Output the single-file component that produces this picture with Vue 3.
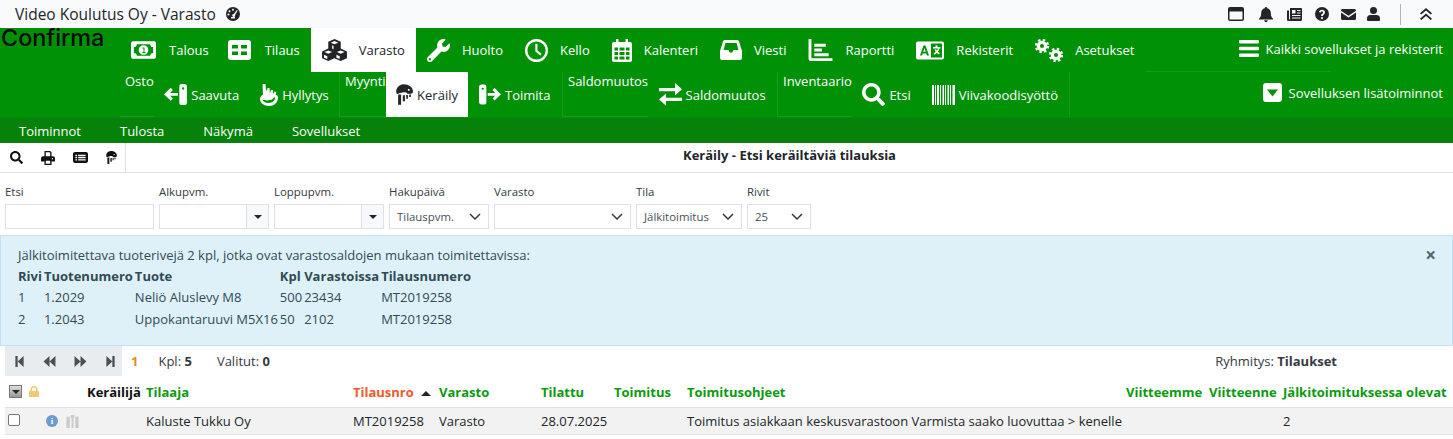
<script setup>
import { h } from 'vue'

const icons = {
  money: { vb: '0 0 26 18', d: 'M2 0h22a2 2 0 0 1 2 2v14a2 2 0 0 1-2 2H2a2 2 0 0 1-2-2V2a2 2 0 0 1 2-2zM6 3a3 3 0 0 1-3 3v6a3 3 0 0 1 3 3h14a3 3 0 0 1 3-3V6a3 3 0 0 1-3-3zM13 4a5 5 0 1 1 0 10a5 5 0 0 1 0-10zM12 6.500v1h1v3.500h-1v1h3v-1h-1V6.500z' },
  grid: { vb: '0 0 23 20', d: 'M3 0h17a3 3 0 0 1 3 3v14a3 3 0 0 1-3 3H3a3 3 0 0 1-3-3V3a3 3 0 0 1 3-3zM4 5v3.500h6V5zM13 5v3.500h6V5zM4 11.500V15h6v-3.500zM13 11.500V15h6v-3.500z' },
  wrench: { vb: '0 0 512 512', d: 'M507.73 109.1c-2.24-9.03-13.54-12.09-20.12-5.51l-74.36 74.36-67.88-11.31-11.31-67.88 74.36-74.36c6.62-6.62 3.43-17.9-5.66-20.16-47.38-11.74-99.55.91-136.58 37.93-39.64 39.64-50.55 97.1-34.05 147.2L18.74 402.76c-24.99 24.99-24.99 65.51 0 90.5 24.99 24.99 65.51 24.99 90.5 0l213.21-213.21c50.12 16.71 107.47 5.68 147.37-34.22 37.07-37.07 49.7-89.32 37.91-136.73zM64 472c-13.25 0-24-10.75-24-24 0-13.26 10.75-24 24-24s24 10.74 24 24c0 13.25-10.75 24-24 24z' },
  clock: { vb: '0 0 24 24', d: 'M12 0a12 12 0 1 1 0 24a12 12 0 0 1 0-24zM12 2.500a9.500 9.500 0 1 0 0 19a9.500 9.500 0 0 0 0-19zM10.800 5h2.200v7l4.300 3.500-1.400 1.700-5.100-4.200z' },
  calendar: { vb: '0 0 20 23', d: 'M4 0h2.500v3h7V0H16v3h2a2 2 0 0 1 2 2v16a2 2 0 0 1-2 2H2a2 2 0 0 1-2-2V5a2 2 0 0 1 2-2h2zM2.500 8.500v3h3.500v-3zM7.500 8.500v3h5v-3zM14 8.500v3h3.500v-3zM2.500 13v3h3.500v-3zM7.500 13v3h5v-3zM14 13v3h3.500v-3zM2.500 17.500v3h3.500v-3zM7.500 17.500v3h5v-3zM14 17.500v3h3.500v-3z' },
  inbox: { vb: '0 0 22 20', d: 'M5 0h12a2 2 0 0 1 2 1.500L22 11v7a2 2 0 0 1-2 2H2a2 2 0 0 1-2-2v-7L3 1.500A2 2 0 0 1 5 0zM5.500 3L3.500 10h5l1.200 2.500h2.600L13.500 10h5l-2-7z' },
  chart: { vb: '0 0 25 23', d: 'M0 0h3v20h22v3H3a3 3 0 0 1-3-3zM6 5h12v3H6zM6 10h8v3H6zM6 15h15v3H6z' },
  lang: { vb: '0 0 28 18', d: 'M2 0h24a2 2 0 0 1 2 2v14a2 2 0 0 1-2 2H2a2 2 0 0 1-2-2V2a2 2 0 0 1 2-2zM7.500 4L4 14h2l.7-2h3.600l.7 2h2L9.500 4zM8.500 6.500l1.200 3.800H7.300zM15 2v14h11V2zM19.500 4h2v1.500h3V7h-1a8 8 0 0 1-1.600 3.300l1.900 1.500-1 1.200-2-1.500-2.300 1.700-1-1.200 2.300-1.700A8 8 0 0 1 18.500 8h1.700c.2.600.5 1 .8 1.300.4-.6.700-1.400.8-2.300H17V5.500h2.500z' },
  bars: { vb: '0 0 20 17', d: 'M1 0h18a1 1 0 0 1 1 1v1.500a1 1 0 0 1-1 1H1a1 1 0 0 1-1-1V1a1 1 0 0 1 1-1zM1 6.700h18a1 1 0 0 1 1 1v1.500a1 1 0 0 1-1 1H1a1 1 0 0 1-1-1V7.700a1 1 0 0 1 1-1zM1 13.500h18a1 1 0 0 1 1 1V16a1 1 0 0 1-1 1H1a1 1 0 0 1-1-1v-1.500a1 1 0 0 1 1-1z' },
  caretbox: { vb: '0 0 19 19', d: 'M3 0h13a3 3 0 0 1 3 3v13a3 3 0 0 1-3 3H3a3 3 0 0 1-3-3V3a3 3 0 0 1 3-3zM4 6.500l5.500 7 5.500-7z' },
  saavuta: { vb: '0 0 24 22', d: 'M18 0h3a3 3 0 0 1 3 3v16a3 3 0 0 1-3 3h-3a2 2 0 0 1-2-2V2a2 2 0 0 1 2-2zM20 3.500a1.200 1.200 0 1 0 0 2.400a1.200 1.200 0 0 0 0-2.400zM7 4l2.200 2.200L6.400 9.300H14.500v3H6.400l2.800 3.100L7 17.500 0 10.800z' },
  toimita: { vb: '0 0 24 22', d: 'M3 0h3a2 2 0 0 1 2 2v18a2 2 0 0 1-2 2H3a3 3 0 0 1-3-3V3a3 3 0 0 1 3-3zM4 3.500a1.200 1.200 0 1 0 0 2.400a1.200 1.200 0 0 0 0-2.400zM17 4l7 6.800-7 6.700-2.200-2.100 2.800-3.100H9.500v-3h8.100l-2.800-3.100z' },
  hand: { vb: '0 0 18 22', d: 'M2.500 0h3l.5 6.500h.8L7.500 4h2l.3 4.500h.6l.5-2.500h2l0 3.300.8.300.7-2 1.700.5-.3 3C17.500 11 18 12 18 13.500 18 18.500 14 22 9 22 4 22 0 19 0 15c0-2 1.500-3.500 3-4.500zM2.500 15.500C5 16.800 10 16.800 12.500 15L14 13.500c1-.5 1.500.5 1 1.500-1.500 3-4 4-6.500 4-3 0-5.500-1.500-6-3.500z' },
  swap: { vb: '0 0 23 23', d: 'M16 0l7 6.200-7 6.300V8.300H0V5h16zM7 10.500v4.200h16V18H7v4.800L0 16.500z' },
  search: { vb: '0 0 512 512', d: 'M505 442.7L405.300 343c-4.500-4.500-10.600-7-17-7H372c27.600-35.300 44-79.700 44-128C416 93.100 322.900 0 208 0S0 93.100 0 208s93.100 208 208 208c48.300 0 92.700-16.400 128-44v16.300c0 6.400 2.500 12.500 7 17l99.700 99.700c9.400 9.400 24.600 9.400 33.900 0l28.300-28.300c9.400-9.400 9.400-24.600.1-34zM208 336c-70.700 0-128-57.200-128-128 0-70.700 57.200-128 128-128 70.700 0 128 57.200 128 128 0 70.700-57.200 128-128 128z' },
  barcode: { vb: '0 0 23 20', d: 'M0 0h2v20H0zM3 0h1v20H3zM5 0h2v20H5zM8 0h1v20H8zM10.500 0h1.500v20h-1.500zM13 0h1v20h-1zM15.500 0h1.500v20h-1.500zM18 0h1v20h-1zM20.500 0h2.500v20h-2.500z' },
  kerays: { vb: '0 0 20 24', d: 'M9 0c6 0 11 3.500 11 8.500 0 1.500-1 2.500-2.500 2.500H13.500c-1-1.500-3-2-6-1.500C4 10 1.500 11.500 1 11.500 0 9 0 7 1 5 2.500 2 5.500 0 9 0zM2.500 12h3.500v12H2.500zM8 13h2.500v7H8zM12 12.500h2v4.500h-2zM15.500 12h2v3h-2zM14 5.500h2v2h-2z' },
  table: { vb: '0 0 22 16', d: 'M3 0h16a3 3 0 0 1 3 3v10a3 3 0 0 1-3 3H3a3 3 0 0 1-3-3V3a3 3 0 0 1 3-3zM3.500 4v2h2.500V4zM7.500 4v2h11V4zM3.500 7.200v2h2.500v-2zM7.500 7.200v2h11v-2zM3.500 10.400v2h2.500v-2zM7.500 10.400v2h11v-2z' },
  print: { vb: '0 0 16 16', d: 'M4 0h6.500L12 1.500V6h1.500A2.500 2.500 0 0 1 16 8.500V12h-4V16H4v-4H0V8.500A2.500 2.500 0 0 1 2.500 6H4zM5.500 1.500V6h5V2.200L9.800 1.500zM5.500 11V14.500h5V11zM13 8a.8.800 0 1 0 0 1.600a.8.800 0 0 0 0-1.600z' },
  browser: { vb: '0 0 16 14', d: 'M2 0h12a2 2 0 0 1 2 2v10a2 2 0 0 1-2 2H2a2 2 0 0 1-2-2V2a2 2 0 0 1 2-2zM1.500 4.500V12a.5.500 0 0 0 .5.500h12a.5.500 0 0 0 .5-.500V4.500z' },
  bell: { vb: '0 0 14 15', d: 'M7 0a1.200 1.200 0 0 1 1.200 1.300C10.500 1.800 11.800 3.700 11.800 6c0 3 .6 4 2.200 5.800V12.500H0v-.7C1.600 10 2.200 9 2.200 6c0-2.300 1.300-4.200 3.600-4.700A1.200 1.200 0 0 1 7 0zM5.200 13.300h3.600A1.800 1.800 0 0 1 5.200 13.300z' },
  news: { vb: '0 0 15 13', d: 'M3.500 0h10.500a1 1 0 0 1 1 1v10.500A1.500 1.500 0 0 1 13.500 13H1.500A1.500 1.500 0 0 1 0 11.500V2.500h2V11a.5.500 0 0 0 1 0V.500A.5.500 0 0 1 3.500 0zM5 2v3.500h3.500V2zM10 2v1h3.500V2zM10 4.500v1h3.500v-1zM5 7v1h8.500V7zM5 9.500v1h8.500v-1z' },
  help: { vb: '0 0 14 14', d: 'M7 0a7 7 0 1 1 0 14a7 7 0 0 1 0-14zM7 2.800c-1.800 0-2.800 1-3 2.300l1.500.6c.2-.8.700-1.300 1.500-1.300.7 0 1.200.4 1.200 1 0 1.100-2.100 1.300-2.100 3.300v.3h1.800c0-1.300 2.100-1.400 2.100-3.700 0-1.500-1.300-2.500-3-2.500zM7 10a1.100 1.100 0 1 0 0 2.200a1.100 1.100 0 0 0 0-2.200z' },
  mail: { vb: '0 0 15 11', d: 'M1.500 0h12A1.500 1.500 0 0 1 15 1.500v.3L7.500 6.800 0 1.800V1.500A1.500 1.500 0 0 1 1.500 0zM0 3.500l7.500 5 7.500-5v6A1.500 1.500 0 0 1 13.500 11h-12A1.500 1.500 0 0 1 0 9.500z' },
  user: { vb: '0 0 13 14', d: 'M6.500 0a3.500 3.500 0 1 1 0 7a3.500 3.500 0 0 1 0-7zM3.500 8h6A3.500 3.500 0 0 1 13 11.500V13a1 1 0 0 1-1 1H1a1 1 0 0 1-1-1v-1.500A3.500 3.500 0 0 1 3.500 8z' },
  chevrons: { vb: '0 0 12 12', d: 'M6 0l6 5.200-1.200 1.300L6 2.400 1.200 6.500 0 5.200zM6 5.500l6 5.200-1.200 1.300L6 7.900 1.200 12 0 10.700z' },
  gauge: { vb: '0 0 14 14', d: 'M7 0a7 7 0 1 1 0 14a7 7 0 0 1 0-14zM7 1.800a1 1 0 1 0 0 2a1 1 0 0 0 0-2zM3.500 3.200a1 1 0 1 0 0 2a1 1 0 0 0 0-2zM10.800 3l-3 4a1.500 1.500 0 1 0 1.300 1l2.600-4.400zM2.500 6.500a1 1 0 1 0 0 2a1 1 0 0 0 0-2zM5 10h4v1.500H5z' },
  first: { vb: '0 0 9 12', d: 'M0 0h2.500v12H0zM9 0v12L2.500 6z' },
  prev: { vb: '0 0 13 12', d: 'M6.500 0v12L0 6zM13 0v12L6.500 6z' },
  next: { vb: '0 0 13 12', d: 'M0 0l6.500 6L0 12zM6.500 0L13 6l-6.500 6z' },
  last: { vb: '0 0 9 12', d: 'M0 0l6.500 6L0 12zM6.500 0H9v12H6.500z' },
  lock: { vb: '0 0 10 11', d: 'M5 0a3.500 3.500 0 0 1 3.500 3.500V5H10v6H0V5h1.500V3.500A3.500 3.500 0 0 1 5 0zM5 1.500a2 2 0 0 0-2 2V5h4V3.500a2 2 0 0 0-2-2z' },
  doc: { vb: '0 0 13 14', d: 'M0 2h3.500v12H0zM9.500 2H13v12H9.500zM4.500 0h4v2l-1 2v10h-2V4l-1-2z' }
}

const Icon = (props) => {
  const i = icons[props.name]
  return h('svg', { viewBox: i.vb, width: props.w, height: props.h, fill: 'currentColor', 'aria-hidden': 'true', style: 'display:block;flex:none' }, [
    h('path', { d: i.d, 'fill-rule': 'evenodd' })
  ])
}
Icon.props = ['name', 'w', 'h']

const main = [
  { t: 'Talous', i: 'money', w: 25, h: 18 },
  { t: 'Tilaus', i: 'grid', w: 23, h: 20 },
  { t: 'Varasto', cubes: true, active: true },
  { t: 'Huolto', i: 'wrench', w: 23, h: 23 },
  { t: 'Kello', i: 'clock', w: 23, h: 23 },
  { t: 'Kalenteri', i: 'calendar', w: 20, h: 23 },
  { t: 'Viesti', i: 'inbox', w: 22, h: 20 },
  { t: 'Raportti', i: 'chart', w: 25, h: 22 },
  { t: 'Rekisterit', i: 'lang', w: 28, h: 19 },
  { t: 'Asetukset', cogs: true }
]

const groups = [
  { label: 'Osto', w: 220, items: [
    { t: 'Saavuta', i: 'saavuta', w: 23, h: 21 },
    { t: 'Hyllytys', i: 'hand', w: 18, h: 22 }
  ] },
  { label: 'Myynti', w: 223, items: [
    { t: 'Keräily', i: 'kerays', w: 17, h: 21, active: true },
    { t: 'Toimita', i: 'toimita', w: 22, h: 21 }
  ] },
  { label: 'Saldomuutos', w: 215, items: [
    { t: 'Saldomuutos', i: 'swap', w: 23, h: 23 }
  ] },
  { label: 'Inventaario', w: 292, items: [
    { t: 'Etsi', i: 'search', w: 23, h: 23 },
    { t: 'Viivakoodisyöttö', i: 'barcode', w: 23, h: 20 }
  ] }
]

const subMenu = ['Toiminnot', 'Tulosta', 'Näkymä', 'Sovellukset']
const topIcons = [
  { i: 'browser', w: 16, h: 14, g: 15 },
  { i: 'bell', w: 14, h: 15, g: 14 },
  { i: 'news', w: 15, h: 13, g: 13 },
  { i: 'help', w: 14, h: 14, g: 12 },
  { i: 'mail', w: 15, h: 11, g: 11 },
  { i: 'user', w: 13, h: 14, g: 0 }
]

const filters = [
  { label: 'Alkupvm.', w: 110, date: true },
  { label: 'Loppupvm.', w: 110, date: true },
  { label: 'Hakupäivä', w: 100, value: 'Tilauspvm.' },
  { label: 'Varasto', w: 137, value: '' },
  { label: 'Tila', w: 106, value: 'Jälkitoimitus' },
  { label: 'Rivit', w: 64, value: '25' }
]

const alertRows = [
  ['1', '1.2029', 'Neliö Aluslevy M8', '500', '23434', 'MT2019258'],
  ['2', '1.2043', 'Uppokantaruuvi M5X16', '50', '2102', 'MT2019258']
]

const heads = [
  { t: 'Tilaaja' }, { t: 'Tilausnro', sort: true }, { t: 'Varasto' }, { t: 'Tilattu' },
  { t: 'Toimitus' }, { t: 'Toimitusohjeet' }, { t: 'Viitteemme' }, { t: 'Viitteenne' }, { t: 'Jälkitoimituksessa olevat' }
]
const row = ['Kaluste Tukku Oy', 'MT2019258', 'Varasto', '28.07.2025', '', 'Toimitus asiakkaan keskusvarastoon Varmista saako luovuttaa > kenelle', '', '', '2']
const colWidths = [19, 58, 64, 207, 86, 102, 73, 73, 439, 83, 74, 170]
</script>

<template>
  <div class="page">
    <header class="titlebar">
      <div class="brand">
        <span class="apptitle">Video Koulutus Oy - Varasto</span>
        <Icon name="gauge" :w="14" :h="14" />
      </div>
      <div class="tools">
        <span v-for="x in topIcons" :key="x.i" class="tool" :style="{ marginRight: x.g + 'px' }">
          <Icon :name="x.i" :w="x.w" :h="x.h" />
        </span>
        <span class="tooldivider"></span>
        <Icon name="chevrons" :w="12" :h="12" />
      </div>
    </header>

    <nav class="mainnav">
      <div class="logo">Confirma</div>
      <div class="navleft">
        <div class="row1">
          <a v-for="m in main" :key="m.t" class="mainitem" :class="{ active: m.active }">
            <span class="mainicon">
              <svg v-if="m.cubes" viewBox="0 0 26 23" width="25" height="22" aria-hidden="true">
                <path fill="#212529" d="M13 0l6.500 3v7l6.500 3v7l-6.500 3-6.500-3-6.500 3L0 20v-7l6.500-3V3z" />
                <path fill="#fff" d="M13 2l4 1.800-4 1.800-4-1.800zM2.500 13.700l4-1.800 4 1.800-4 1.800zM15.500 13.700l4-1.800 4 1.800-4 1.800zM2 16.500l3.500 1.500v3L2 19.500zM15 16.500l3.500 1.500v3L15 19.500zM10.500 6.500l1.500 .7v3.500l-1.500-.7z" />
              </svg>
              <svg v-else-if="m.cogs" viewBox="0 0 28 23" width="28" height="23" aria-hidden="true">
                <g fill="none" stroke="#fff">
                  <circle cx="7" cy="7" r="3.700" stroke-width="3.200" />
                  <circle cx="7" cy="7" r="6" stroke-width="2.400" stroke-dasharray="2.360 2.360" />
                  <circle cx="21" cy="16" r="3.700" stroke-width="3.200" />
                  <circle cx="21" cy="16" r="6" stroke-width="2.400" stroke-dasharray="2.360 2.360" />
                </g>
              </svg>
              <Icon v-else :name="m.i" :w="m.w" :h="m.h" />
            </span>
            <span>{{ m.t }}</span>
          </a>
        </div>
        <div class="row2">
          <section v-for="g in groups" :key="g.label" class="group" :style="{ width: g.w + 'px' }">
            <div class="grouplabel">{{ g.label }}</div>
            <a v-for="it in g.items" :key="it.t" class="subitem" :class="{ active: it.active }">
              <Icon :name="it.i" :w="it.w" :h="it.h" />
              <span>{{ it.t }}</span>
            </a>
          </section>
        </div>
      </div>
      <div class="navright">
        <a class="allapps"><Icon name="bars" :w="20" :h="17" /><span>Kaikki sovellukset ja rekisterit</span></a>
        <hr class="navrule" />
        <a class="moreapps"><Icon name="caretbox" :w="19" :h="19" /><span>Sovelluksen lisätoiminnot</span></a>
      </div>
    </nav>

    <div class="submenu"><span v-for="s in subMenu" :key="s">{{ s }}</span></div>

    <div class="toolbar">
      <div class="tbicons">
        <Icon name="search" :w="13" :h="13" />
        <Icon name="print" :w="14" :h="14" />
        <Icon name="table" :w="15" :h="11" />
        <Icon name="kerays" :w="11" :h="13" />
      </div>
      <h1 class="pagetitle">Keräily - Etsi keräiltäviä tilauksia</h1>
    </div>

    <form class="filters" @submit.prevent>
      <label class="field etsi"><span>Etsi</span><span class="box"></span></label>
      <label v-for="f in filters" :key="f.label" class="field" :style="{ width: f.w + 'px' }">
        <span>{{ f.label }}</span>
        <span class="box" :class="{ sel: !f.date }">
          <template v-if="f.date"><i class="datebtn"><b class="caret"></b></i></template>
          <template v-else>
            <em>{{ f.value }}</em>
            <svg viewBox="0 0 12 7" width="12" height="7" aria-hidden="true"><path d="M1 1l5 5 5-5" fill="none" stroke="#343a40" stroke-width="1.500" /></svg>
          </template>
        </span>
      </label>
    </form>

    <section class="alert">
      <span class="close">×</span>
      <p>Jälkitoimitettava tuoterivejä 2 kpl, jotka ovat varastosaldojen mukaan toimitettavissa:</p>
      <table>
        <thead><tr><th>Rivi</th><th>Tuotenumero</th><th>Tuote</th><th>Kpl</th><th>Varastoissa</th><th>Tilausnumero</th></tr></thead>
        <tbody><tr v-for="r in alertRows" :key="r[0]"><td v-for="(c, i) in r" :key="i">{{ c }}</td></tr></tbody>
      </table>
    </section>

    <div class="pagerbar">
      <div class="pager">
        <Icon name="first" :w="9" :h="11" />
        <Icon name="prev" :w="13" :h="11" />
        <Icon name="next" :w="13" :h="11" />
        <Icon name="last" :w="9" :h="11" />
      </div>
      <span class="pagenum">1</span>
      <span class="stat">Kpl: <b>5</b></span>
      <span class="stat">Valitut: <b>0</b></span>
      <span class="grouping">Ryhmitys: <b>Tilaukset</b></span>
    </div>

    <table class="grid">
      <colgroup><col v-for="(w, i) in colWidths" :key="i" :style="{ width: w + 'px' }" /></colgroup>
      <thead>
        <tr>
          <th><span class="hdrsel"><b class="caret"></b></span></th>
          <th><Icon class="lock" name="lock" :w="10" :h="11" /></th>
          <th class="kerailija">Keräilijä</th>
          <th v-for="c in heads" :key="c.t" :class="{ sorted: c.sort }">
            {{ c.t }}<svg v-if="c.sort" class="sortarrow" viewBox="0 0 10 5" width="10" height="5" aria-hidden="true"><path d="M5 0l5 5H0z" fill="#212529" /></svg>
          </th>
        </tr>
      </thead>
      <tbody>
        <tr>
          <td><span class="chk"></span></td>
          <td>
            <div class="rowicons">
              <span class="info">i</span>
              <Icon class="doc" name="doc" :w="13" :h="13" />
            </div>
          </td>
          <td></td>
          <td v-for="(c, i) in row" :key="i">{{ c }}</td>
        </tr>
      </tbody>
    </table>
  </div>
</template>

<style>
html, body { margin: 0; background: #fff; overflow: hidden; }
</style>

<style scoped>
.page { width: 1453px; font-family: "Open Sans", "Noto Sans", sans-serif; font-size: 13px; color: #212529; }
a { color: inherit; text-decoration: none; }
p, h1 { margin: 0; }

.titlebar { height: 28px; background: #f8f9fa; display: flex; justify-content: space-between; align-items: center; padding: 0 21px 0 15px; box-sizing: border-box; }
.brand { display: flex; align-items: center; gap: 10px; }
.apptitle { font-size: 15.500px; }
.tools { display: flex; align-items: center; color: #212529; }
.tool { display: block; }
.tooldivider { width: 1px; height: 21px; background: #adb5bd; margin: 0 19px 0 20px; }

.mainnav { height: 90px; background: #009106; display: flex; color: #fff; }
.logo { width: 120px; flex: none; box-sizing: border-box; font-family: Inter, sans-serif; font-weight: 500; font-size: 23.500px; line-height: 20px; color: #0a0a0a; padding-left: 1px; letter-spacing: -.1px; }
.navleft { width: 1025px; flex: none; }
.row1 { display: flex; height: 44px; }
.mainitem { display: flex; align-items: center; gap: 12px; padding: 0 11px; white-space: nowrap; }
.mainitem:first-child { gap: 13px; padding-right: 10px; }
.mainitem:nth-child(2) { padding-left: 9.500px; gap: 13.500px; }
.mainitem.active { background: #fff; color: #212529; }
.mainicon, .mainicon svg { display: block; }
.row2 { display: flex; height: 46px; }
.group { display: flex; box-sizing: border-box; height: 45px; border-right: 1px solid #1a9a1c; }
.grouplabel { padding-left: 5px; line-height: 18px; height: 45px; box-sizing: border-box; border-bottom: 1px solid #1a9a1c; }
.subitem { display: flex; align-items: center; gap: 4px; padding: 0 10.500px; height: 45px; white-space: nowrap; }
.subitem.active { background: #fff; color: #212529; }
.navright { flex: 1; min-width: 0; display: flex; flex-direction: column; }
.allapps { height: 41px; display: flex; align-items: center; justify-content: flex-end; gap: 7px; padding-right: 10px; white-space: nowrap; }
.navrule { width: 186px; height: 1px; margin: 2px 0 0; border: 0; background: #1a9a1c; }
.moreapps { margin-top: 11px; display: flex; align-items: center; justify-content: flex-end; gap: 7px; padding-right: 10px; white-space: nowrap; }

.submenu { height: 25px; background: #068109; color: #fff; display: flex; align-items: center; padding-left: 19px; gap: 39px; }

.toolbar { height: 30px; box-sizing: border-box; border-bottom: 1px solid #dee2e6; display: flex; }
.tbicons { width: 126px; box-sizing: border-box; border-right: 1px solid #dee2e6; display: flex; align-items: center; gap: 18px; padding-left: 10px; color: #111; }
.pagetitle { flex: 1; text-align: center; font-size: 13px; font-weight: 700; line-height: 25px; }

.filters { height: 62px; box-sizing: border-box; display: flex; gap: 5px; padding: 11px 5px 0; }
.field { display: flex; flex-direction: column; gap: 5px; font-size: 11.400px; line-height: 15px; color: #343a40; }
.etsi { width: 149px; }
.box { height: 25px; box-sizing: border-box; border: 1px solid #dee2e6; background: #fff; display: flex; justify-content: flex-end; }
.sel { justify-content: space-between; align-items: center; padding: 0 7px; }
.sel em { font-style: normal; font-size: 11.400px; color: #495057; }
.datebtn { width: 21px; background: #f8f9fa; border-left: 1px solid #dee2e6; display: flex; align-items: center; justify-content: center; }
.caret { display: block; width: 0; height: 0; border-left: 4px solid transparent; border-right: 4px solid transparent; border-top: 4px solid #212529; }

.alert { height: 111px; box-sizing: border-box; background: #dff1f8; border: 1px solid #bfe3f2; padding: 10px 17px; position: relative; color: #2f4b55; }
.alert p { line-height: 18px; }
.close { position: absolute; right: 16px; top: 7px; font-size: 19px; font-weight: 700; line-height: 24px; color: #54666e; }
.alert table { border-collapse: collapse; margin-top: 1px; }
.alert th, .alert td { padding: 0 2px 0 0; height: 21.500px; text-align: left; white-space: nowrap; }
.alert th { font-weight: 700; }
.alert td { font-weight: 400; }

.pagerbar { height: 30px; display: flex; align-items: center; padding: 0 116px 0 5px; color: #343a40; }
.pager { width: 117px; height: 30px; background: #e9ecef; display: flex; align-items: center; box-sizing: border-box; padding-left: 10px; gap: 18.500px; color: #495057; }
.pagenum { margin-left: 9px; color: #e08a2e; font-weight: 700; margin-right: 20px; }
.stat { margin-right: 25px; }
.grouping { margin-left: auto; }

.grid { margin-left: 5px; width: 1448px; table-layout: fixed; border-collapse: collapse; }
.grid th { height: 31px; padding: 0; text-align: left; font-weight: 700; color: #0a9a0e; white-space: nowrap; }
.grid td { height: 26px; padding: 0; background: #f2f2f2; border-top: 1px solid #dee2e6; border-bottom: 1px solid #dee2e6; white-space: nowrap; }
.grid .kerailija { color: #111; padding-left: 5px; }
.grid .sorted { color: #f0592b; }
.sortarrow { margin-left: 7px; vertical-align: 1px; }
.hdrsel { display: flex; align-items: center; justify-content: center; width: 13px; height: 13px; margin-left: 4px; background: linear-gradient(#ddd, #999); border: 1px solid #777; box-sizing: border-box; }
.lock { color: #eccb6f; margin-left: 5px; }
.chk { display: block; width: 12px; height: 12px; box-sizing: border-box; border: 1px solid #767676; border-radius: 2px; background: #fff; margin: 0 0 2px 3px; }
.rowicons { display: flex; align-items: center; gap: 8px; padding-left: 22px; }
.info { display: block; width: 12px; height: 12px; border-radius: 50%; background: #6c9bd1; color: #fff; font: 700 9px/12px "Liberation Serif", serif; text-align: center; }
.doc { color: #c9c9c9; }
</style>
